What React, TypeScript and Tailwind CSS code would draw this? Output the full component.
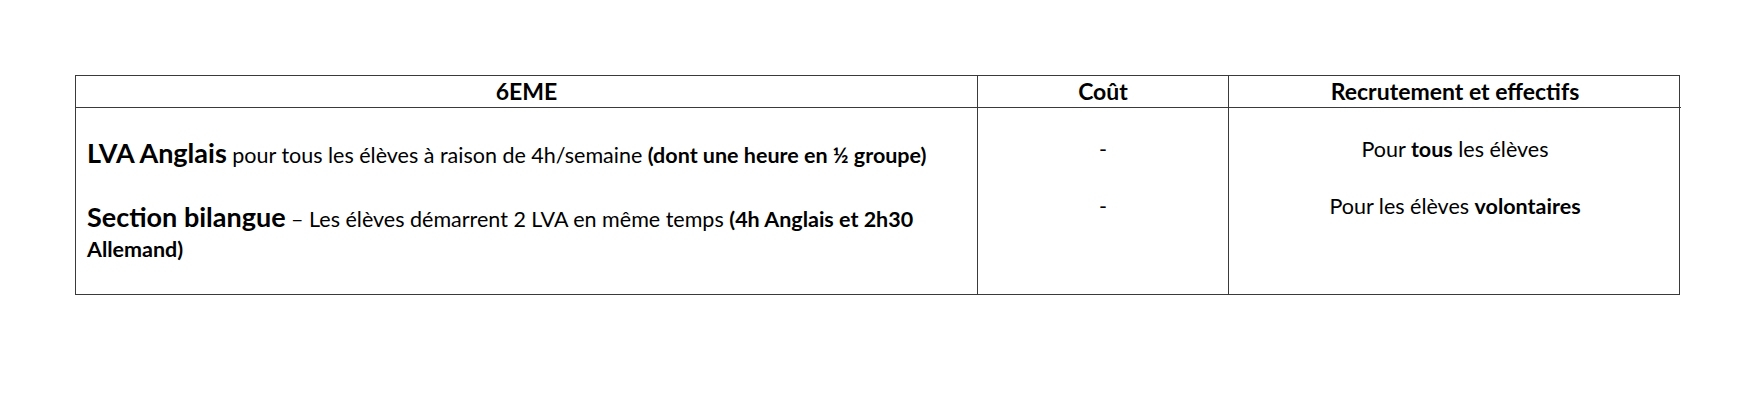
export default function App() {
  return (
    <div className="h-[410px] w-[1755px] bg-white pl-[75px] pt-[75px] font-['Lato',sans-serif] text-black">
      <div className="grid w-[1605px] grid-cols-[902px_251px_452px] border border-[#3a3a3a]">
        <div className="flex h-[32px] items-center justify-center border-b border-r border-[#3a3a3a] text-[23px] font-bold">
          6EME
        </div>
        <div className="flex h-[32px] items-center justify-center border-b border-r border-[#3a3a3a] text-[23px] font-bold">
          Coût
        </div>
        <div className="flex h-[32px] items-center justify-center border-b border-[#3a3a3a] text-[23px] font-bold">
          Recrutement et effectifs
        </div>

        <div className="h-[186px] border-r border-[#3a3a3a] px-[11px] pt-[30px] text-[21.5px] leading-[30px]">
          <p>
            <span className="text-[27px] font-bold">LVA Anglais</span> pour tous les élèves à raison de 4h/semaine{' '}
            <span className="font-bold">(dont une heure en ½ groupe)</span>
          </p>
          <p className="mt-[32px]">
            <span className="text-[27px] font-bold">Section bilangue</span> – Les élèves démarrent 2 LVA en même temps{' '}
            <span className="font-bold">(4h Anglais et 2h30 Allemand)</span>
          </p>
        </div>
        <div className="border-r border-[#3a3a3a] pt-[27px] text-center text-[21.5px] leading-[29px]">
          <p>-</p>
          <p className="mt-[28px]">-</p>
        </div>
        <div className="pt-[27px] text-center text-[21.5px] leading-[29px]">
          <p>
            Pour <span className="font-bold">tous</span> les élèves
          </p>
          <p className="mt-[28px]">
            Pour les élèves <span className="font-bold">volontaires</span>
          </p>
        </div>
      </div>
    </div>
  )
}
